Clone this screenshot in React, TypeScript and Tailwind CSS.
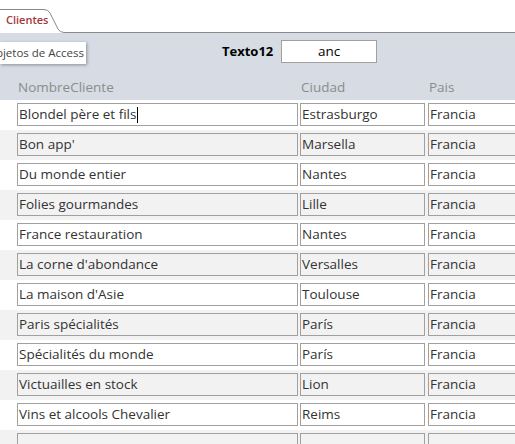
import React from "react";

const rows = [
  ["Blondel père et fils", "Estrasburgo"],
  ["Bon app'", "Marsella"],
  ["Du monde entier", "Nantes"],
  ["Folies gourmandes", "Lille"],
  ["France restauration", "Nantes"],
  ["La corne d'abondance", "Versalles"],
  ["La maison d'Asie", "Toulouse"],
  ["Paris spécialités", "París"],
  ["Spécialités du monde", "París"],
  ["Victuailles en stock", "Lion"],
  ["Vins et alcools Chevalier", "Reims"],
  ["", ""],
];

export default function App() {
  return (
    <div
      className="w-[515px] h-[444px] overflow-hidden bg-white text-[13.5px] text-[#333]"
      style={{ fontFamily: '"Open Sans", "Noto Sans", sans-serif' }}
    >
      {/* tab strip */}
      <div className="relative h-[33px] bg-white">
        <svg className="absolute left-0 top-0" width="515" height="33">
          <path
            d="M0 9.5 H44 Q48 9.5 50 13 L58 29 Q60 32.5 64 32.5 H515"
            fill="none"
            stroke="#8a8a8a"
            strokeWidth="1"
          />
        </svg>
        <div className="absolute left-[6px] top-[12px] text-[11px] font-semibold text-[#a4373a]">
          Clientes
        </div>
      </div>

      {/* header */}
      <div className="relative h-[67px] bg-[#d6dbe4]">
        <div className="absolute left-0 top-[9px] h-[22px] w-[86px] overflow-hidden bg-white shadow-[1px_1px_3px_rgba(0,0,0,0.35)]">
          <div className="absolute right-[2px] top-[2px] whitespace-nowrap text-[11.5px] leading-[18px] text-[#444]">
            Objetos de Access
          </div>
        </div>
        <div className="flex items-center pt-[7px]">
          <div className="ml-[222px] w-[59px] font-bold text-[13px] text-black">Texto12</div>
          <div className="flex h-[23px] w-[96px] items-center justify-center border border-[#a0a0a0] bg-white text-black">
            anc
          </div>
        </div>
        <div className="mt-[14px] flex text-[#8c8c8c]">
          <div className="ml-[18px] w-[283px] shrink-0">NombreCliente</div>
          <div className="w-[128px] shrink-0">Ciudad</div>
          <div>Pais</div>
        </div>
      </div>

      {/* rows */}
      {rows.map((r, i) => (
        <div
          key={i}
          className={`flex h-[30px] pl-[17px] pt-[3px] ${i % 2 === 0 ? "bg-white" : "bg-[#f2f2f2]"}`}
        >
          <div className="flex h-[23px] w-[281px] shrink-0 items-center border border-[#a0a0a0] pl-[1px] whitespace-nowrap">
            {r[0]}
            {i === 0 && <span className="ml-[1px] inline-block h-[16px] w-[1px] bg-black" />}
          </div>
          <div className="ml-[2px] flex h-[23px] w-[125px] shrink-0 items-center border border-[#a0a0a0] pl-[1px] whitespace-nowrap">
            {r[1]}
          </div>
          <div className="ml-[3px] flex h-[23px] w-[100px] shrink-0 items-center border border-[#a0a0a0] pl-[1px] whitespace-nowrap">
            {r[0] ? "Francia" : ""}
          </div>
        </div>
      ))}
    </div>
  );
}
